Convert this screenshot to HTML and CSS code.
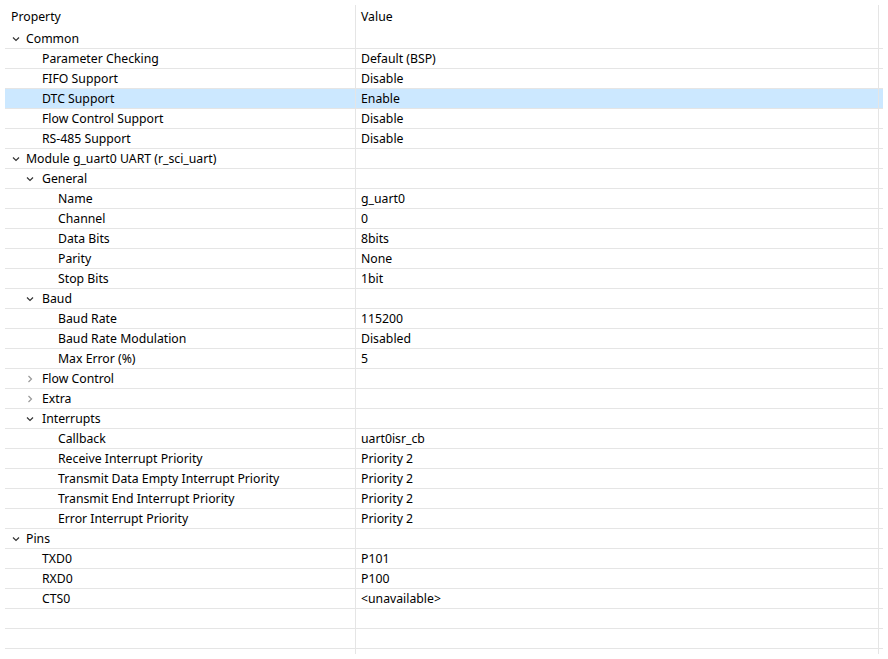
FILE: index.html
```html
<!DOCTYPE html>
<html>
<head>
<meta charset="utf-8">
<link rel="stylesheet" href="styles.css">
</head>
<body>
<div class="table">
  <div class="head">
    <div class="hc c1">Property</div>
    <div class="hc c2">Value</div>
    <div class="hc c3"></div>
  </div>
  <div class="row"><div class="c c1 l0"><svg class="chev" viewBox="0 0 8 8"><polyline points="1,2.5 4,5.5 7,2.5"/></svg>Common</div><div class="c c2"></div><div class="c c3"></div></div>
  <div class="row"><div class="c c1 l1">Parameter Checking</div><div class="c c2">Default (BSP)</div><div class="c c3"></div></div>
  <div class="row"><div class="c c1 l1">FIFO Support</div><div class="c c2">Disable</div><div class="c c3"></div></div>
  <div class="row sel"><div class="c c1 l1">DTC Support</div><div class="c c2">Enable</div><div class="c c3"></div></div>
  <div class="row"><div class="c c1 l1">Flow Control Support</div><div class="c c2">Disable</div><div class="c c3"></div></div>
  <div class="row"><div class="c c1 l1">RS-485 Support</div><div class="c c2">Disable</div><div class="c c3"></div></div>
  <div class="row"><div class="c c1 l0"><svg class="chev" viewBox="0 0 8 8"><polyline points="1,2.5 4,5.5 7,2.5"/></svg>Module g_uart0 UART (r_sci_uart)</div><div class="c c2"></div><div class="c c3"></div></div>
  <div class="row"><div class="c c1 l1"><svg class="chev" viewBox="0 0 8 8"><polyline points="1,2.5 4,5.5 7,2.5"/></svg>General</div><div class="c c2"></div><div class="c c3"></div></div>
  <div class="row"><div class="c c1 l2">Name</div><div class="c c2">g_uart0</div><div class="c c3"></div></div>
  <div class="row"><div class="c c1 l2">Channel</div><div class="c c2">0</div><div class="c c3"></div></div>
  <div class="row"><div class="c c1 l2">Data Bits</div><div class="c c2">8bits</div><div class="c c3"></div></div>
  <div class="row"><div class="c c1 l2">Parity</div><div class="c c2">None</div><div class="c c3"></div></div>
  <div class="row"><div class="c c1 l2">Stop Bits</div><div class="c c2">1bit</div><div class="c c3"></div></div>
  <div class="row"><div class="c c1 l1"><svg class="chev" viewBox="0 0 8 8"><polyline points="1,2.5 4,5.5 7,2.5"/></svg>Baud</div><div class="c c2"></div><div class="c c3"></div></div>
  <div class="row"><div class="c c1 l2">Baud Rate</div><div class="c c2">115200</div><div class="c c3"></div></div>
  <div class="row"><div class="c c1 l2">Baud Rate Modulation</div><div class="c c2">Disabled</div><div class="c c3"></div></div>
  <div class="row"><div class="c c1 l2">Max Error (%)</div><div class="c c2">5</div><div class="c c3"></div></div>
  <div class="row"><div class="c c1 l1"><svg class="chev closed" viewBox="0 0 8 8"><polyline points="2.5,1 5.5,4 2.5,7"/></svg>Flow Control</div><div class="c c2"></div><div class="c c3"></div></div>
  <div class="row"><div class="c c1 l1"><svg class="chev closed" viewBox="0 0 8 8"><polyline points="2.5,1 5.5,4 2.5,7"/></svg>Extra</div><div class="c c2"></div><div class="c c3"></div></div>
  <div class="row"><div class="c c1 l1"><svg class="chev" viewBox="0 0 8 8"><polyline points="1,2.5 4,5.5 7,2.5"/></svg>Interrupts</div><div class="c c2"></div><div class="c c3"></div></div>
  <div class="row"><div class="c c1 l2">Callback</div><div class="c c2">uart0isr_cb</div><div class="c c3"></div></div>
  <div class="row"><div class="c c1 l2">Receive Interrupt Priority</div><div class="c c2">Priority 2</div><div class="c c3"></div></div>
  <div class="row"><div class="c c1 l2">Transmit Data Empty Interrupt Priority</div><div class="c c2">Priority 2</div><div class="c c3"></div></div>
  <div class="row"><div class="c c1 l2">Transmit End Interrupt Priority</div><div class="c c2">Priority 2</div><div class="c c3"></div></div>
  <div class="row"><div class="c c1 l2">Error Interrupt Priority</div><div class="c c2">Priority 2</div><div class="c c3"></div></div>
  <div class="row"><div class="c c1 l0"><svg class="chev" viewBox="0 0 8 8"><polyline points="1,2.5 4,5.5 7,2.5"/></svg>Pins</div><div class="c c2"></div><div class="c c3"></div></div>
  <div class="row"><div class="c c1 l1">TXD0</div><div class="c c2">P101</div><div class="c c3"></div></div>
  <div class="row"><div class="c c1 l1">RXD0</div><div class="c c2">P100</div><div class="c c3"></div></div>
  <div class="row"><div class="c c1 l1">CTS0</div><div class="c c2">&lt;unavailable&gt;</div><div class="c c3"></div></div>
  <div class="row"><div class="c c1"></div><div class="c c2"></div><div class="c c3"></div></div>
  <div class="row"><div class="c c1"></div><div class="c c2"></div><div class="c c3"></div></div>
  <div class="row tail"><div class="c c1"></div><div class="c c2"></div><div class="c c3"></div></div>
</div>
</body>
</html>
```

FILE: styles.css
```css
html, body {
  margin: 0;
  padding: 0;
  background: #ffffff;
}
body {
  font-family: "Noto Sans", "Open Sans", sans-serif;
  font-size: 12.25px;
  color: #000000;
}
.table {
  margin-left: 5px;
  width: 878px;
}
.head {
  display: flex;
  height: 29px;
}
.hc {
  margin-top: 5px;
  height: 24px;
  box-sizing: border-box;
  line-height: 24px;
  white-space: nowrap;
}
.hc.c1 {
  width: 351px;
  padding-left: 6px;
  border-right: 1px solid #e5e5e5;
}
.hc.c2 {
  width: 523px;
  padding-left: 5px;
  border-right: 1px solid #e5e5e5;
}
.row {
  display: flex;
  height: 20px;
  box-sizing: border-box;
  border-bottom: 1px solid #e5e5e5;
}
.row.sel {
  background: #cce8ff;
}
.row.tail {
  height: 5px;
  border-bottom: none;
}
.c {
  box-sizing: border-box;
  height: 100%;
  line-height: 19px;
  white-space: nowrap;
  display: flex;
  align-items: center;
}
.c1 {
  width: 351px;
  border-right: 1px solid #e5e5e5;
}
.c2 {
  width: 523px;
  padding-left: 5px;
  border-right: 1px solid #e5e5e5;
}
.c3 {
  flex: 1;
}
.l0 { padding-left: 7px; }
.l1 { padding-left: 37px; }
.l2 { padding-left: 53px; }
.l0 .chev { margin-right: 6px; }
.l1 .chev { margin-left: -16px; margin-right: 8px; }
.chev {
  width: 8px;
  height: 8px;
  flex: none;
  fill: none;
  stroke: #333333;
  stroke-width: 1.2;
}
.chev.closed {
  stroke: #999999;
}
```
